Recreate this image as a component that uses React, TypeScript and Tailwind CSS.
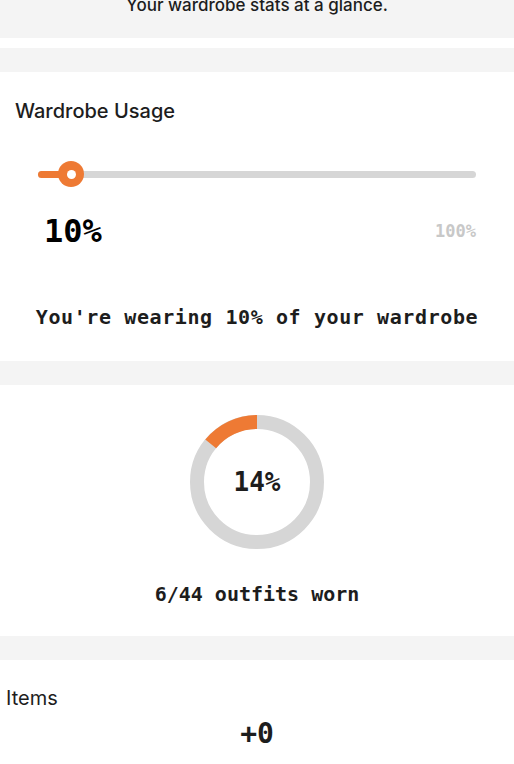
import React from "react";

const mono = { fontFamily: '"DejaVu Sans Mono", "Liberation Mono", monospace' };

export default function App() {
  const r = 60;
  const c = 2 * Math.PI * r;
  const pct = 0.14;
  return (
    <div className="w-[514px] h-[764px] overflow-hidden bg-white" style={{ fontFamily: 'Inter, "Noto Sans", sans-serif' }}>
      <div className="h-[38px] bg-[#f4f4f4] flex justify-center overflow-hidden">
        <div className="-mt-[7px] text-[17px] leading-[24px] font-medium text-[#1d1d1d]">Your wardrobe stats at a glance.</div>
      </div>
      <div className="h-[10px]" />
      <div className="h-[24px] bg-[#f4f4f4]" />

      <div className="h-[289px] flex flex-col">
        <div className="pl-[15px] pt-[26px] text-[20px] leading-[26px] font-medium text-[#1d1d1d]">Wardrobe Usage</div>
        <div className="mt-[37px] ml-[38px] w-[438px] h-[26px] relative flex items-center">
          <div className="w-full h-[7px] rounded-full bg-[#d6d6d6]" />
          <div className="absolute left-0 top-[10px] h-[7px] w-[34px] rounded-full bg-[#ee7a34]" />
          <div className="absolute left-[20px] top-0 w-[26px] h-[26px] rounded-full bg-[#ee7a34] flex items-center justify-center">
            <div className="w-[9px] h-[9px] rounded-full bg-white" />
          </div>
        </div>
        <div className="mt-[24px] ml-[44px] mr-[38px] flex items-center justify-between">
          <div className="text-[32px] leading-[40px] font-bold text-black" style={mono}>10%</div>
          <div className="text-[17px] leading-[24px] font-bold text-[#c8c8c8]" style={mono}>100%</div>
        </div>
        <div className="mt-[53px] flex justify-center">
          <div className="text-[20px] leading-[26px] font-bold text-[#1d1d1d] tracking-[0.6px]" style={mono}>You're wearing 10% of your wardrobe</div>
        </div>
      </div>

      <div className="h-[24px] bg-[#f4f4f4]" />

      <div className="h-[251px] flex flex-col items-center">
        <div className="mt-[27px] relative w-[140px] h-[140px] flex items-center justify-center">
          <svg width="140" height="140" viewBox="0 0 140 140" className="absolute inset-0">
            <circle cx="70" cy="70" r={r} fill="none" stroke="#d6d6d6" strokeWidth="14" />
            <circle
              cx="70"
              cy="70"
              r={r}
              fill="none"
              stroke="#ee7a34"
              strokeWidth="14"
              strokeDasharray={`${c * pct} ${c}`}
              transform="rotate(-90 70 70) scale(1 -1) translate(0 -140)"
            />
          </svg>
          <div className="relative text-[26px] leading-[32px] font-bold text-[#1d1d1d]" style={mono}>14%</div>
        </div>
        <div className="mt-[29px] text-[20px] leading-[26px] font-bold text-[#1d1d1d]" style={mono}>6/44 outfits worn</div>
      </div>

      <div className="h-[24px] bg-[#f4f4f4]" />

      <div className="flex flex-col">
        <div className="pl-[6px] pt-[25px] text-[20px] leading-[26px] text-[#1d1d1d]">Items</div>
        <div className="mt-[6px] flex justify-center">
          <div className="text-[28px] leading-[34px] font-bold text-[#1d1d1d]" style={mono}>+0</div>
        </div>
      </div>
    </div>
  );
}
